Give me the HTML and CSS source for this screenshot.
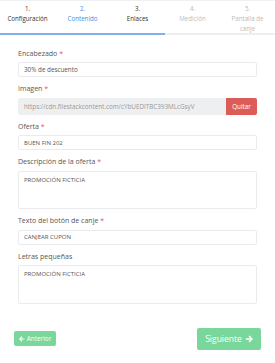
FILE: index.html
```html
<!DOCTYPE html>
<html lang="es">
<head>
    <meta charset="UTF-8">
    <title>Contenido</title>
    <link rel="stylesheet" href="styles.css">
</head>
<body>
    <div class="wizard">
        <ul class="steps">
            <li class="step done"><span>1.</span><span>Configuración</span></li>
            <li class="step active"><span>2.</span><span>Contenido</span></li>
            <li class="step done"><span>3.</span><span>Enlaces</span></li>
            <li class="step disabled"><span>4.</span><span>Medición</span></li>
            <li class="step disabled"><span>5.</span><span>Pantalla de<br>canje</span></li>
        </ul>
        <div class="progress"><div class="progress-bar" style="width: 60%;"></div></div>

        <form class="form">
            <div class="group">
                <label>Encabezado <span class="req">*</span></label>
                <input type="text" class="field" value="30% de descuento">
            </div>
            <div class="group">
                <label>Imagen <span class="req">*</span></label>
                <div class="file-row">
                    <input type="text" class="field readonly" value="https://cdn.filestackcontent.com/cYbUEDITBC393MLcGsyV" readonly>
                    <button type="button" class="btn-remove">Quitar</button>
                </div>
            </div>
            <div class="group">
                <label>Oferta <span class="req">*</span></label>
                <input type="text" class="field upper" value="BUEN FIN 202">
            </div>
            <div class="group">
                <label>Descripción de la oferta <span class="req">*</span></label>
                <textarea class="field area upper">PROMOCIÓN FICTICIA</textarea>
            </div>
            <div class="group">
                <label>Texto del botón de canje <span class="req">*</span></label>
                <input type="text" class="field upper" value="CANJEAR CUPON">
            </div>
            <div class="group">
                <label>Letras pequeñas</label>
                <textarea class="field area upper">PROMOCIÓN FICTICIA</textarea>
            </div>
        </form>

        <div class="actions">
            <button type="button" class="btn btn-prev">
                <svg viewBox="0 0 10 10" width="6" height="6"><path d="M5 1.2 1.2 5 5 8.8M1.5 5H9" fill="none" stroke="#fff" stroke-width="1.9"/></svg>
                Anterior
            </button>
            <button type="button" class="btn btn-next">
                Siguiente
                <svg viewBox="0 0 10 10" width="8" height="8"><path d="M5 1.2 8.8 5 5 8.8M8.5 5H1" fill="none" stroke="#fff" stroke-width="1.8"/></svg>
            </button>
        </div>
    </div>
</body>
</html>
```

FILE: styles.css
```css
* {
    box-sizing: border-box;
}
body {
    margin: 0;
    font-family: "Open Sans", "Liberation Sans", sans-serif;
    background: #fff;
    color: #555;
}
.wizard {
    width: 275px;
    height: 363px;
    border-top: 1px solid #eef0f2;
}
.steps {
    list-style: none;
    margin: 0;
    padding: 3px 0 0;
    display: flex;
    height: 32px;
}
.step {
    flex: 1;
    display: flex;
    flex-direction: column;
    align-items: center;
    text-align: center;
    font-size: 6.2px;
    line-height: 10px;
    color: #333;
}
.step.active {
    color: #3d8fe0;
}
.step.disabled {
    color: #bbb;
}
.progress {
    height: 1.5px;
    background: #eceef0;
}
.progress-bar {
    height: 100%;
    background: #7fb2ea;
}
.form {
    padding: 14px 18px 0;
}
.group {
    margin-bottom: 7px;
}
label {
    display: block;
    font-size: 7px;
    line-height: 10px;
    margin-bottom: 3.5px;
    color: #555;
}
.req {
    color: #e35b5b;
}
.field {
    display: block;
    width: 100%;
    height: 15px;
    padding: 0 5px;
    border: 1px solid #e9ebee;
    border-radius: 2px;
    font-family: inherit;
    font-size: 6.3px;
    color: #555;
    background: #fff;
    outline: none;
}
.upper {
    font-size: 6px;
}
.area {
    height: 38.5px;
    padding-top: 4px;
    resize: none;
}
.file-row {
    display: flex;
}
.readonly {
    height: 17px;
    background: #eeeff1;
    border-color: #eeeff1;
    color: #999;
    border-radius: 2px 0 0 2px;
}
.btn-remove {
    flex: none;
    width: 31px;
    height: 17px;
    border: none;
    border-radius: 0 2px 2px 0;
    background: #dc5c58;
    color: #fff;
    font-family: inherit;
    font-size: 6.3px;
    padding: 0;
}
.actions {
    display: flex;
    justify-content: space-between;
    align-items: center;
    padding: 0 14px;
    margin-top: 24px;
}
.btn {
    display: flex;
    align-items: center;
    justify-content: center;
    gap: 2px;
    border: none;
    border-radius: 2px;
    background: #79d79b;
    color: #fff;
    font-family: inherit;
    padding: 0;
}
.btn-prev {
    width: 42px;
    height: 15px;
    font-size: 6.4px;
}
.btn-next {
    width: 64px;
    height: 22px;
    font-size: 8.5px;
    gap: 3px;
}
```
